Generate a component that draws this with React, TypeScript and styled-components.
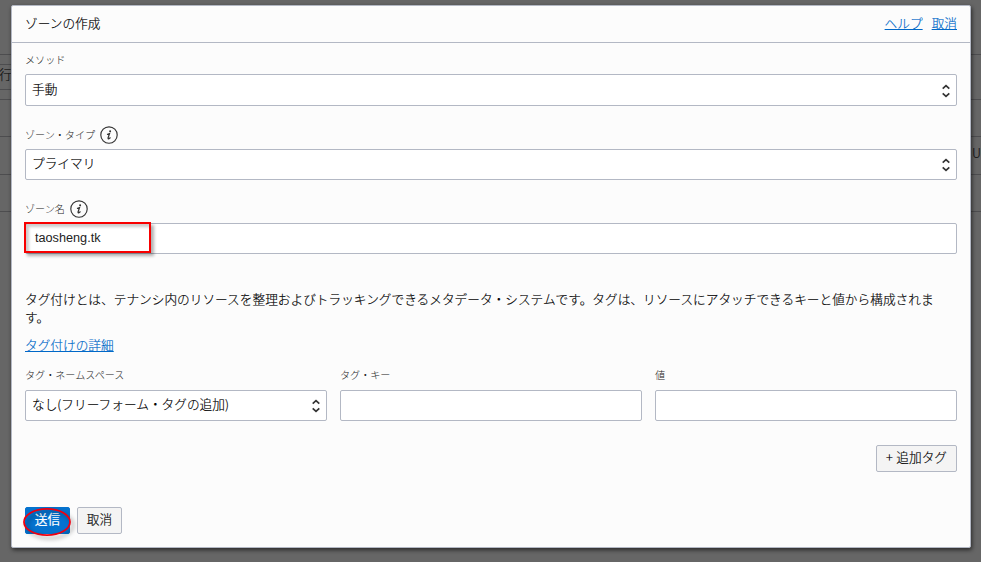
import React from "react";
import styled, { createGlobalStyle } from "styled-components";

const Global = createGlobalStyle`
  * { box-sizing: border-box; }
  body { margin: 0; overflow: hidden; }
  body, button, input { font-family: "Liberation Sans", "Noto Sans CJK JP", sans-serif; font-size: 12.68px; font-weight: 300; color: #000; }
`;

const Page = styled.div`
  position: relative;
  width: 981px;
  height: 562px;
  padding: 5px 10px 14px 11px;
  background: #666;
  -webkit-text-stroke: 0.15px currentColor;
`;

const Backdrop = styled.div`
  position: absolute;
  inset: 0;
  overflow: hidden;
`;

const Rule = styled.div<{ $top: number; $leftOnly?: boolean }>`
  position: absolute;
  top: ${(p) => p.$top}px;
  left: 0;
  width: ${(p) => (p.$leftOnly ? "11px" : "100%")};
  height: 1px;
  background: #4d4d4f;
`;

const Peek = styled.span<{ $left: number; $top: number }>`
  position: absolute;
  left: ${(p) => p.$left}px;
  top: ${(p) => p.$top}px;
  line-height: 18px;
  color: #111;
`;

const LightLatin = styled.span`
  font-family: "Noto Sans CJK JP", sans-serif;
  line-height: 1;
`;

const Dialog = styled.section`
  position: relative;
  height: 543px;
  background: #fcfcfc;
  border: 1px solid #b3b8c4;
  border-radius: 2px;
  box-shadow: 1px 2px 4px rgba(0, 0, 0, 0.6);
`;

const Header = styled.header`
  display: flex;
  align-items: center;
  justify-content: space-between;
  height: 37px;
  padding: 0 13px;
  border-bottom: 1px solid #b3b8c4;
`;

const Title = styled.h1`
  margin: 0;
  font-size: inherit;
  font-weight: inherit;
  line-height: 18px;
`;

const Links = styled.nav`
  display: flex;
  gap: 9px;
`;

const Link = styled.a`
  color: #0068c8;
  line-height: 18px;
  text-decoration: underline;
`;

const Body = styled.div`
  padding: 7px 13px 0;
`;

const Field = styled.div<{ $gap?: number }>`
  display: flex;
  flex-direction: column;
  margin-bottom: ${(p) => p.$gap ?? 0}px;
`;

const Label = styled.label<{ $height?: number }>`
  display: flex;
  align-items: center;
  gap: 5px;
  height: ${(p) => p.$height ?? 24}px;
  padding-bottom: 3px;
  font-size: 10.1px;
  line-height: 14px;
  color: #222;
  -webkit-text-stroke: 0;
`;

const Control = styled.div<{ $height?: number }>`
  position: relative;
  display: flex;
  align-items: center;
  justify-content: space-between;
  height: ${(p) => p.$height ?? 31}px;
  padding: 0 6px 1px;
  border: 1px solid #b3b8c4;
  border-radius: 2px;
  background: #fff;
  line-height: 18px;
`;

const ZoneName = styled.span`
  padding-left: 3px;
  color: #222;
  -webkit-text-stroke: 0;
`;

const Highlight = styled.div`
  position: absolute;
  left: -2px;
  top: -2px;
  width: 127px;
  height: 31px;
  border: 2px solid #f80000;
  box-shadow: 3px 3px 3px rgba(0, 0, 0, 0.3), inset 3px 3px 3px rgba(0, 0, 0, 0.2);
`;

const Description = styled.p`
  margin: 37px 0 10px;
  line-height: 18px;
`;

const TagGrid = styled.div`
  display: grid;
  grid-template-columns: repeat(3, 302px);
  gap: 13px;
  margin-top: 9px;
`;

const Actions = styled.div<{ $end?: boolean; $top: number }>`
  display: flex;
  justify-content: ${(p) => (p.$end ? "flex-end" : "flex-start")};
  gap: 7px;
  margin-top: ${(p) => p.$top}px;
`;

const Button = styled.button<{ $primary?: boolean; $width: number }>`
  position: relative;
  width: ${(p) => p.$width}px;
  height: 27px;
  padding: 0 0 1px;
  border: 1px solid ${(p) => (p.$primary ? "#0572ce" : "#b3b8c4")};
  border-radius: 2px;
  background: ${(p) => (p.$primary ? "#0572ce" : "#f4f4f4")};
  color: ${(p) => (p.$primary ? "#fff" : "#000")};
  font-weight: ${(p) => (p.$primary ? 400 : 300)};
  line-height: 18px;
  white-space: nowrap;
`;

const Ring = styled.svg`
  position: absolute;
  left: -3px;
  top: 0;
  overflow: visible;
  filter: drop-shadow(3px 3px 2px rgba(0, 0, 0, 0.4));
`;

const StepperIcon = styled.svg`
  position: relative;
  top: 1px;
  flex: none;
`;

const InfoIcon = styled.svg`
  position: relative;
  top: -1px;
  flex: none;
`;

const Stepper = () => (
  <StepperIcon width="8" height="14" viewBox="0 0 8 14" fill="none" stroke="#333" strokeWidth="1.7">
    <path d="M0.7 4.6 L4 1.6 L7.3 4.6 M0.7 9.4 L4 12.4 L7.3 9.4" />
  </StepperIcon>
);

const Info = () => (
  <InfoIcon width="18" height="18" viewBox="0 0 18 18" fill="none" stroke="#333">
    <circle cx="9" cy="9" r="8.2" strokeWidth="1.15" />
    <circle cx="10.1" cy="5.3" r="1" fill="#333" stroke="none" />
    <path d="M7 8.5 L9.5 7.6 L8.1 11.9 Q7.9 13.1 9 12.7 L10.5 11.5" strokeWidth="1.3" />
  </InfoIcon>
);

export default function App() {
  return (
    <>
      <Global />
      <Page>
        <Backdrop>
          {[54, 99, 136, 174, 211].map((y) => <Rule key={y} $top={y} />)}
          <Rule $top={64} $leftOnly />
          <Rule $top={89} $leftOnly />
          <Peek $left={-1} $top={66}>行</Peek>
          <Peek $left={972} $top={145}><LightLatin>U</LightLatin></Peek>
        </Backdrop>
        <Dialog>
          <Header>
            <Title>ゾーンの作成</Title>
            <Links>
              <Link>ヘルプ</Link>
              <Link>取消</Link>
            </Links>
          </Header>
          <Body>
            <Field $gap={19}>
              <Label>メソッド</Label>
              <Control $height={32}>手動<Stepper /></Control>
            </Field>
            <Field $gap={19}>
              <Label>ゾーン・タイプ<Info /></Label>
              <Control>プライマリ<Stepper /></Control>
            </Field>
            <Field>
              <Label>ゾーン名<Info /></Label>
              <Control>
                <ZoneName>taosheng.tk</ZoneName>
                <Highlight />
              </Control>
            </Field>
            <Description>
              タグ付けとは、テナンシ内のリソースを整理およびトラッキングできるメタデータ・システムです。タグは、リソースにアタッチできるキーと値から構成されます。
            </Description>
            <Link>タグ付けの詳細</Link>
            <TagGrid>
              <Field>
                <Label $height={26}>タグ・ネームスペース</Label>
                <Control>
                  <span>なし<LightLatin>(</LightLatin>フリーフォーム・タグの追加<LightLatin>)</LightLatin></span>
                  <Stepper />
                </Control>
              </Field>
              <Field>
                <Label $height={26}>タグ・キー</Label>
                <Control />
              </Field>
              <Field>
                <Label $height={26}>値</Label>
                <Control />
              </Field>
            </TagGrid>
            <Actions $end $top={24}>
              <Button $width={81}><LightLatin>+</LightLatin> 追加タグ</Button>
            </Actions>
            <Actions $top={35}>
              <Button $primary $width={45}>
                送信
                <Ring width="49" height="28" fill="none" stroke="#ee0010" strokeWidth="1.8">
                  <ellipse cx="24" cy="14" rx="23" ry="13.2" />
                </Ring>
              </Button>
              <Button $width={45}>取消</Button>
            </Actions>
          </Body>
        </Dialog>
      </Page>
    </>
  );
}
